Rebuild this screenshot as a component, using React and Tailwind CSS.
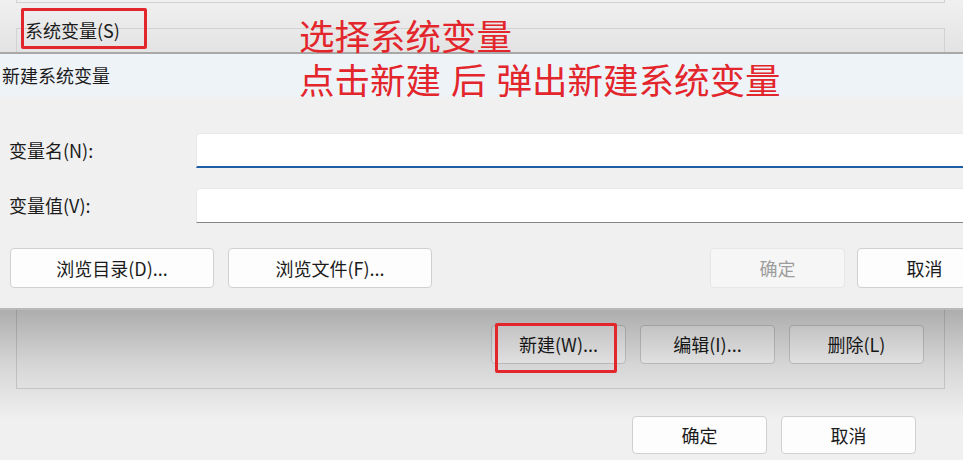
import React from "react";

const font = { fontFamily: "'Noto Sans CJK SC', 'Noto Sans', sans-serif" };

function WinButton({ children, className = "", disabled = false }) {
  return (
    <div
      className={`flex shrink-0 items-center justify-center rounded-[4px] border text-[18px] ${
        disabled
          ? "border-[#e6e6e6] bg-[#f6f6f6] text-[#9d9d9d]"
          : "border-[#d0d0d0] bg-[#fdfdfd] text-[#1b1b1b]"
      } ${className}`}
    >
      {children}
    </div>
  );
}

function Field({ label, active }) {
  return (
    <div className="flex items-center">
      <div className="w-[196px] shrink-0 pl-[9px] text-[18px] text-[#1b1b1b]">{label}</div>
      <div
        className={`h-[35px] flex-1 rounded-tl-[4px] border-l border-t border-[#e8e8e8] bg-white ${
          active ? "border-b-2 border-b-[#1d5fa5]" : "border-b border-b-[#868686]"
        }`}
      />
    </div>
  );
}

export default function App() {
  return (
    <div className="relative h-[460px] w-[963px] overflow-hidden bg-[#f0f0f0]" style={font}>
      {/* back window, upper strip */}
      <div className="relative h-[52px] bg-gradient-to-b from-[#f0f0f0] to-[#e3e3e3]">
        <div className="ml-[16px] h-[3px] w-[929px] border-x border-b border-[#d2d2d2]" />
        <div className="ml-[16px] mt-[25px] h-[24px] w-[929px] border-x border-t border-[#d2d2d2]" />
        <div className="absolute left-[25px] top-[18px] text-[18px] leading-[24px] text-[#1b1b1b]">
          系统变量(S)
        </div>
        <div className="absolute left-[21px] top-[8px] h-[41px] w-[126px] rounded-[2px] border-[3px] border-[#e3252c]" />
      </div>

      {/* front dialog */}
      <div className="border-t-2 border-[#a8a8a8]">
        <div className="flex h-[43px] items-center bg-[#eef3f8] pl-[2px] text-[18px] text-[#1b1b1b]">
          新建系统变量
        </div>
        <div className="flex flex-col overflow-hidden border-b-2 border-[#b9b9b9] bg-[#f0f0f0] pb-[20px] pt-[36px]">
          <Field label="变量名(N):" active />
          <div className="mt-[20px]">
            <Field label="变量值(V):" />
          </div>
          <div className="mt-[25px] flex items-center pl-[10px]">
            <WinButton className="h-[40px] w-[204px]">浏览目录(D)...</WinButton>
            <WinButton className="ml-[14px] h-[40px] w-[204px]">浏览文件(F)...</WinButton>
            <WinButton disabled className="ml-[278px] h-[40px] w-[135px]">确定</WinButton>
            <WinButton className="ml-[12px] h-[40px] w-[135px]">取消</WinButton>
          </div>
        </div>
      </div>

      {/* back window, lower part */}
      <div className="relative">
        <div className="ml-[16px] flex h-[79px] w-[929px] items-start justify-end gap-[14px] border-x border-b border-[#d2d2d2] pr-[20px] pt-[15px]">
          <WinButton className="h-[39px] w-[135px]">新建(W)...</WinButton>
          <WinButton className="h-[39px] w-[135px]">编辑(I)...</WinButton>
          <WinButton className="h-[39px] w-[135px]">删除(L)</WinButton>
        </div>
        <div className="mt-[27px] flex justify-end gap-[14px] pr-[47px]">
          <WinButton className="h-[38px] w-[135px]">确定</WinButton>
          <WinButton className="h-[38px] w-[135px]">取消</WinButton>
        </div>
        {/* drop shadow of the dialog above */}
        <div className="pointer-events-none absolute inset-x-0 top-0 h-[110px] bg-gradient-to-b from-[rgba(0,0,0,0.28)] via-[rgba(0,0,0,0.11)] to-transparent" />
        <div className="absolute left-[495px] top-[13px] h-[50px] w-[122px] rounded-[2px] border-[3px] border-[#e3252c]" />
      </div>

      {/* annotations */}
      <div className="absolute left-[299px] top-[15px] text-[35.5px] leading-[40px] text-[#e3252c]">
        选择系统变量
      </div>
      <div className="absolute left-[299px] top-[59px] flex whitespace-nowrap text-[35.5px] leading-[40px] text-[#e3252c]">
        <span>点击新建</span>
        <span className="inline-block w-[10px]" />
        <span>后</span>
        <span className="inline-block w-[10px]" />
        <span>弹出新建系统变量</span>
      </div>
    </div>
  );
}
